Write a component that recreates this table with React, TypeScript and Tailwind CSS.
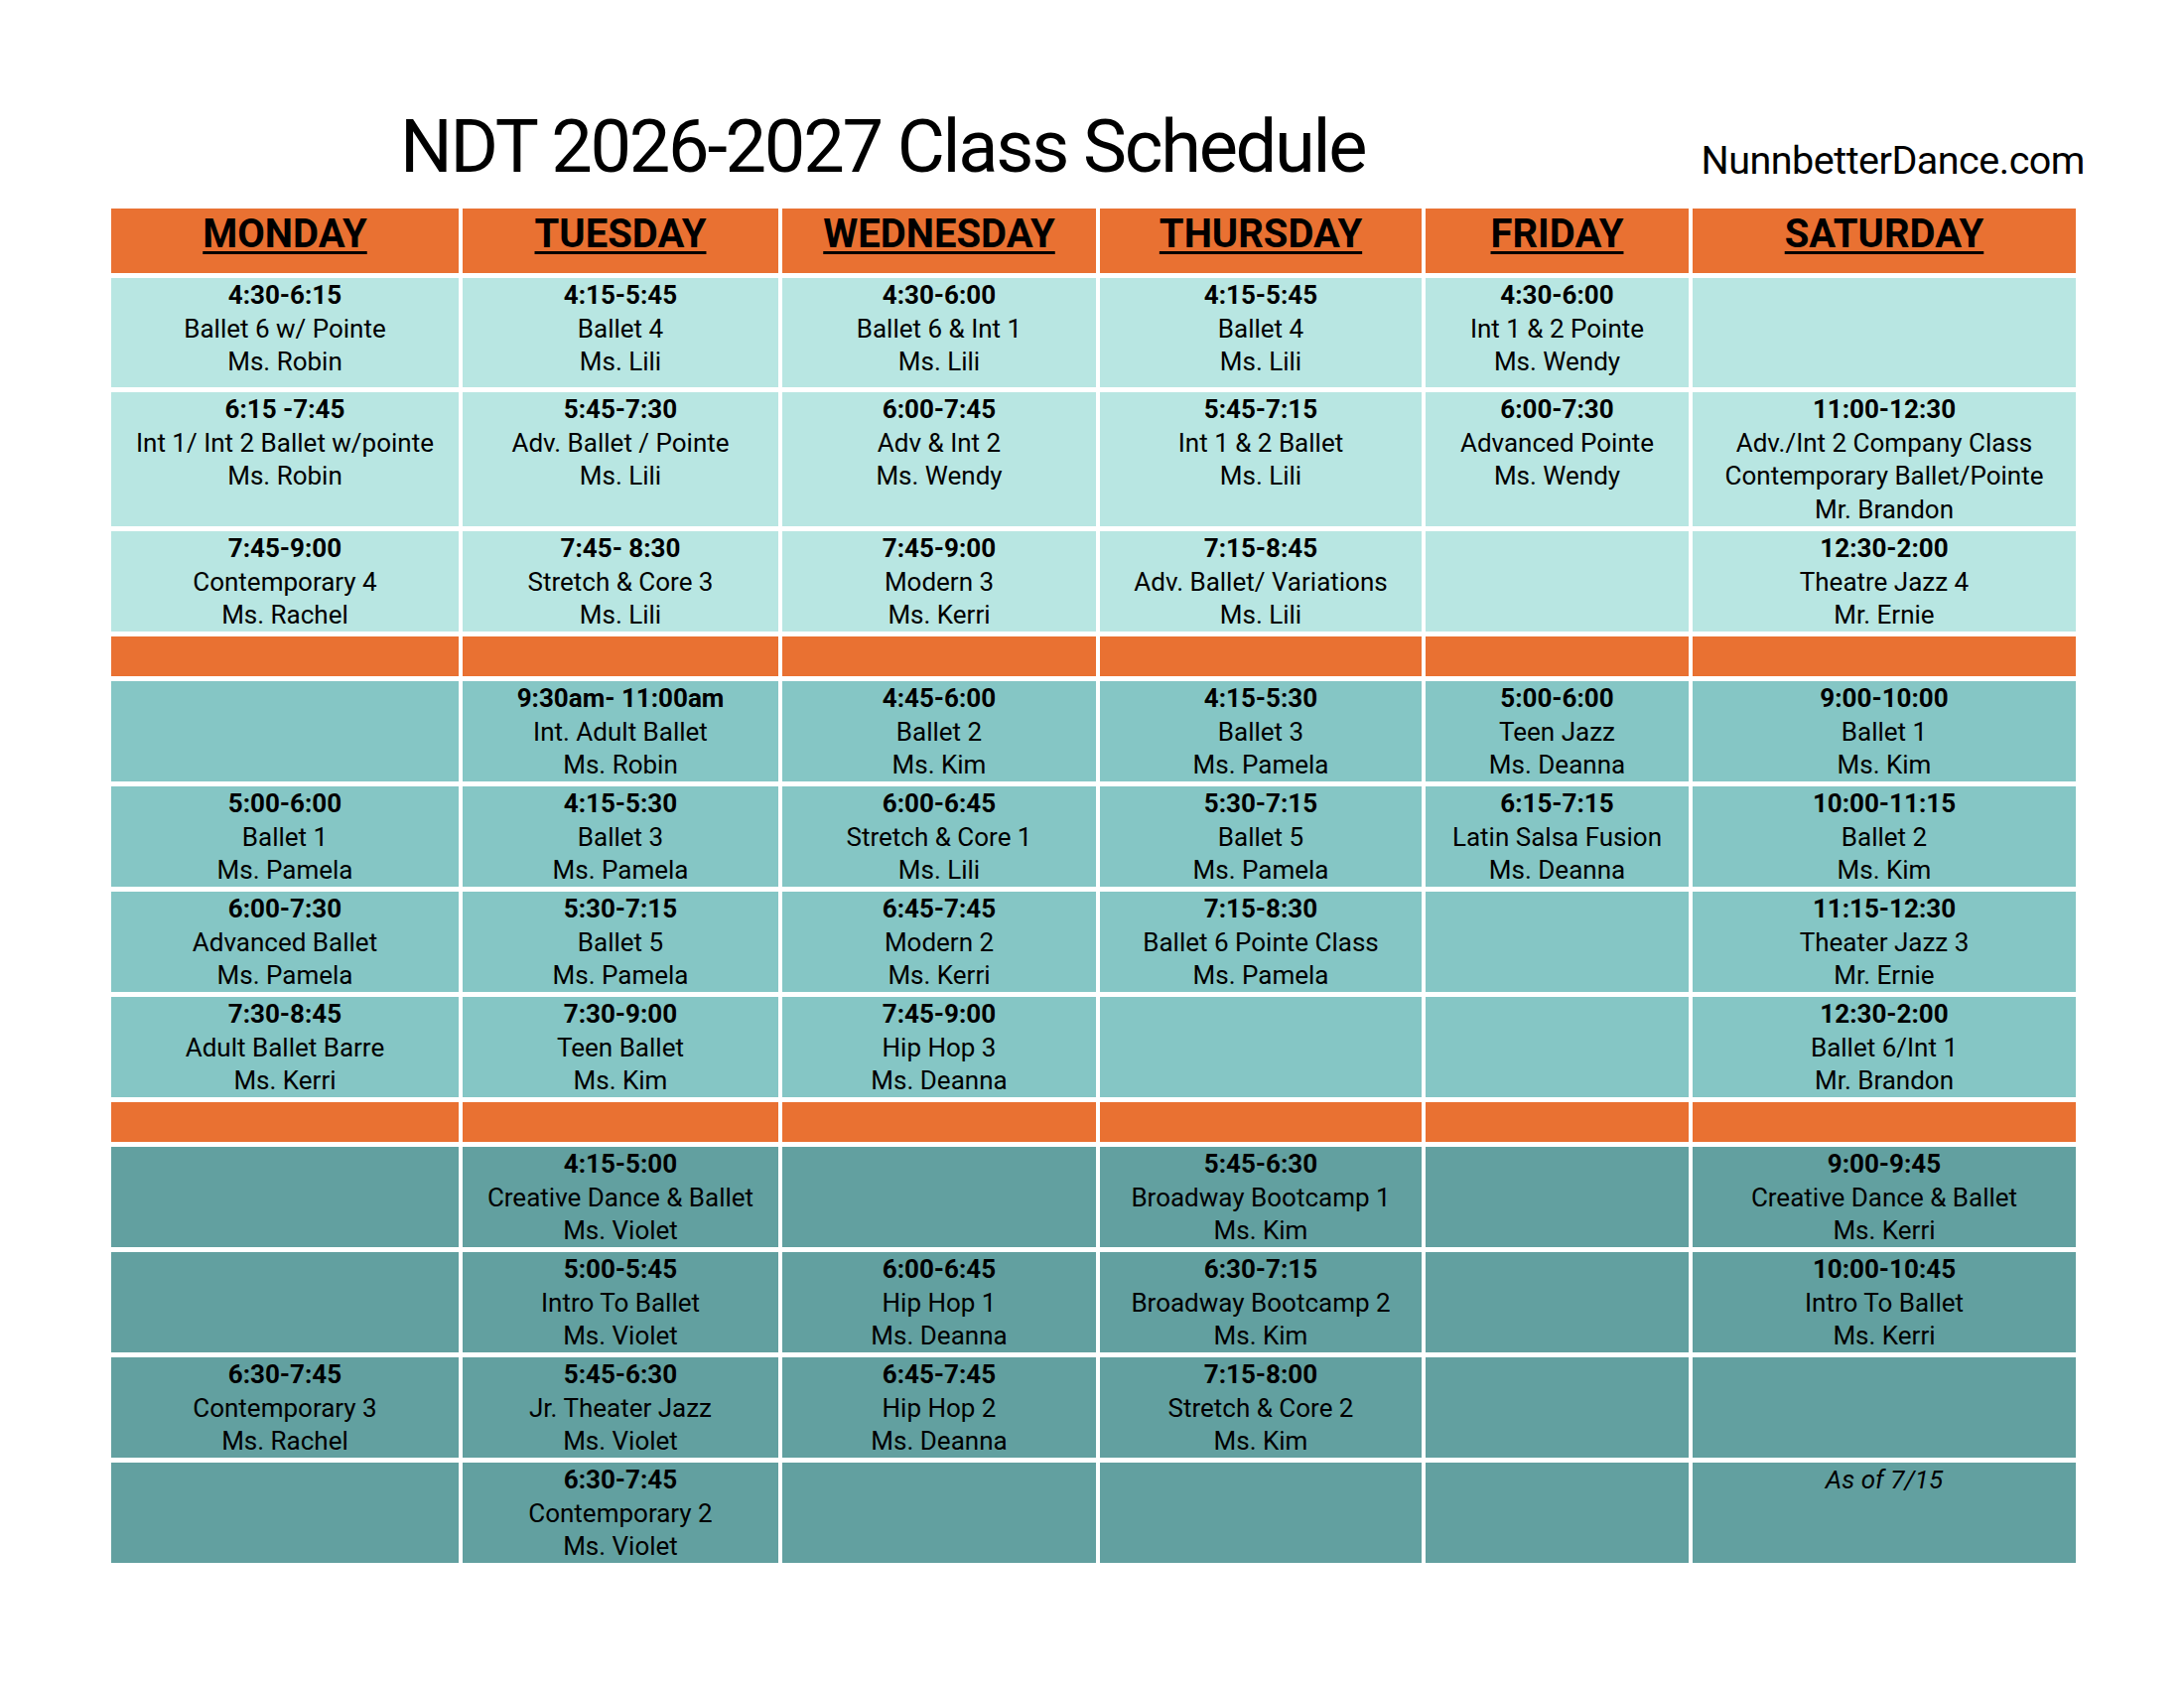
type Cell = { time?: string; lines?: string[]; note?: string } | null;

const days = ["MONDAY", "TUESDAY", "WEDNESDAY", "THURSDAY", "FRIDAY", "SATURDAY"];

const c = (time: string, ...lines: string[]): Cell => ({ time, lines });

// three blocks of rows, one colour each
const blocks: { bg: string; heights: string[]; rows: Cell[][] }[] = [
  {
    bg: "bg-[#b8e6e2]",
    heights: ["h-[110px]", "h-[135px]", "h-[101px]"],
    rows: [
      [
        c("4:30-6:15", "Ballet 6 w/ Pointe", "Ms. Robin"),
        c("4:15-5:45", "Ballet 4", "Ms. Lili"),
        c("4:30-6:00", "Ballet 6 & Int 1", "Ms. Lili"),
        c("4:15-5:45", "Ballet 4", "Ms. Lili"),
        c("4:30-6:00", "Int 1 & 2 Pointe", "Ms. Wendy"),
        null,
      ],
      [
        c("6:15 -7:45", "Int 1/ Int 2 Ballet w/pointe", "Ms. Robin"),
        c("5:45-7:30", "Adv. Ballet / Pointe", "Ms. Lili"),
        c("6:00-7:45", "Adv & Int 2", "Ms. Wendy"),
        c("5:45-7:15", "Int 1 & 2 Ballet", "Ms. Lili"),
        c("6:00-7:30", "Advanced Pointe", "Ms. Wendy"),
        c("11:00-12:30", "Adv./Int 2 Company Class", "Contemporary Ballet/Pointe", "Mr. Brandon"),
      ],
      [
        c("7:45-9:00", "Contemporary 4", "Ms. Rachel"),
        c("7:45- 8:30", "Stretch & Core 3", "Ms. Lili"),
        c("7:45-9:00", "Modern 3", "Ms. Kerri"),
        c("7:15-8:45", "Adv. Ballet/ Variations", "Ms. Lili"),
        null,
        c("12:30-2:00", "Theatre Jazz 4", "Mr. Ernie"),
      ],
    ],
  },
  {
    bg: "bg-[#85c6c5]",
    heights: ["h-[101px]", "h-[101px]", "h-[101px]", "h-[101px]"],
    rows: [
      [
        null,
        c("9:30am- 11:00am", "Int. Adult Ballet", "Ms. Robin"),
        c("4:45-6:00", "Ballet 2", "Ms. Kim"),
        c("4:15-5:30", "Ballet 3", "Ms. Pamela"),
        c("5:00-6:00", "Teen Jazz", "Ms. Deanna"),
        c("9:00-10:00", "Ballet 1", "Ms. Kim"),
      ],
      [
        c("5:00-6:00", "Ballet 1", "Ms. Pamela"),
        c("4:15-5:30", "Ballet 3", "Ms. Pamela"),
        c("6:00-6:45", "Stretch & Core 1", "Ms. Lili"),
        c("5:30-7:15", "Ballet 5", "Ms. Pamela"),
        c("6:15-7:15", "Latin Salsa Fusion", "Ms. Deanna"),
        c("10:00-11:15", "Ballet 2", "Ms. Kim"),
      ],
      [
        c("6:00-7:30", "Advanced Ballet", "Ms. Pamela"),
        c("5:30-7:15", "Ballet 5", "Ms. Pamela"),
        c("6:45-7:45", "Modern 2", "Ms. Kerri"),
        c("7:15-8:30", "Ballet 6 Pointe Class", "Ms. Pamela"),
        null,
        c("11:15-12:30", "Theater Jazz 3", "Mr. Ernie"),
      ],
      [
        c("7:30-8:45", "Adult Ballet Barre", "Ms. Kerri"),
        c("7:30-9:00", "Teen Ballet", "Ms. Kim"),
        c("7:45-9:00", "Hip Hop 3", "Ms. Deanna"),
        null,
        null,
        c("12:30-2:00", "Ballet 6/Int 1", "Mr. Brandon"),
      ],
    ],
  },
  {
    bg: "bg-[#62a0a0]",
    heights: ["h-[101px]", "h-[101px]", "h-[101px]", "h-[101px]"],
    rows: [
      [
        null,
        c("4:15-5:00", "Creative Dance & Ballet", "Ms. Violet"),
        null,
        c("5:45-6:30", "Broadway Bootcamp 1", "Ms. Kim"),
        null,
        c("9:00-9:45", "Creative Dance & Ballet", "Ms. Kerri"),
      ],
      [
        null,
        c("5:00-5:45", "Intro To Ballet", "Ms. Violet"),
        c("6:00-6:45", "Hip Hop 1", "Ms. Deanna"),
        c("6:30-7:15", "Broadway Bootcamp 2", "Ms. Kim"),
        null,
        c("10:00-10:45", "Intro To Ballet", "Ms. Kerri"),
      ],
      [
        c("6:30-7:45", "Contemporary 3", "Ms. Rachel"),
        c("5:45-6:30", "Jr. Theater Jazz", "Ms. Violet"),
        c("6:45-7:45", "Hip Hop 2", "Ms. Deanna"),
        c("7:15-8:00", "Stretch & Core 2", "Ms. Kim"),
        null,
        null,
      ],
      [
        null,
        c("6:30-7:45", "Contemporary 2", "Ms. Violet"),
        null,
        null,
        null,
        { note: "As of 7/15" },
      ],
    ],
  },
];

function ClassCell({ cell, bg, h }: { cell: Cell; bg: string; h: string }) {
  return (
    <div className={`${bg} ${h} pt-px text-center text-[26px] leading-[33.7px] text-black`}>
      {cell?.time && <div className="font-bold">{cell.time}</div>}
      {cell?.lines?.map((l) => (
        <div key={l}>{l}</div>
      ))}
      {cell?.note && <div className="italic">{cell.note}</div>}
    </div>
  );
}

function Spacer() {
  return (
    <>
      {days.map((d) => (
        <div key={d} className="h-[40px] bg-[#e97132]" />
      ))}
    </>
  );
}

export default function App() {
  return (
    <div
      className="w-[2200px] h-[1700px] bg-white"
      style={{ fontFamily: "Roboto, 'Noto Sans', sans-serif" }}
    >
      {/* Title line */}
      <div className="flex items-end h-[200px] pb-[15px] pl-[403px] pr-[100px]">
        <h1 className="text-[74px] leading-none font-normal text-black tracking-[-2.3px]">
          NDT 2026-2027 Class Schedule
        </h1>
        <span className="ml-auto text-[39.5px] leading-none text-black tracking-[-0.5px] mb-[4px]">
          NunnbetterDance.com
        </span>
      </div>

      {/* Schedule grid */}
      <div className="ml-[112px] mt-[10px] w-[1979px] grid grid-cols-[350px_318px_316px_324px_265px_386px] gap-x-[4px] gap-y-[5px]">
        {days.map((d) => (
          <div key={d} className="h-[65px] pt-[3px] bg-[#e97132] text-center">
            <span className="text-[40px] leading-[46px] font-bold underline underline-offset-[4px] decoration-[3px] text-black">
              {d}
            </span>
          </div>
        ))}

        {blocks.map((b, bi) => (
          <>
            {bi > 0 && <Spacer key={`s${bi}`} />}
            {b.rows.map((row, ri) =>
              row.map((cell, ci) => (
                <ClassCell key={`${bi}-${ri}-${ci}`} cell={cell} bg={b.bg} h={b.heights[ri]} />
              ))
            )}
          </>
        ))}
      </div>
    </div>
  );
}
